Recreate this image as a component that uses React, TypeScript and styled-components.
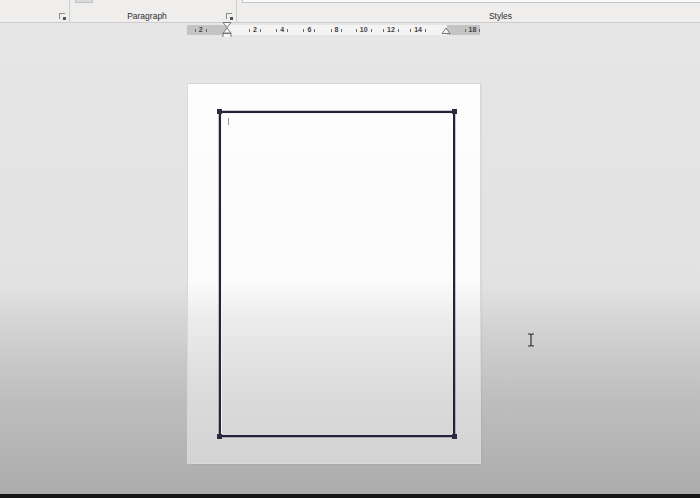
import React from "react";
import styled, { createGlobalStyle } from "styled-components";

const Global = createGlobalStyle`
  html, body { margin: 0; padding: 0; }
  body { width: 700px; height: 498px; overflow: hidden; font-family: "Liberation Sans", Arial, sans-serif; }
`;

const Screen = styled.div`
  width: 700px;
  height: 498px;
  display: flex;
  flex-direction: column;
  position: relative;
  overflow: hidden;
  background: #111;
`;

const Ribbon = styled.div`
  height: 22px;
  display: flex;
  background: #efeeed;
  border-bottom: 1px solid #cdcdcd;
`;

const Group = styled.div<{ $w?: number; $pl?: number; $pr?: number }>`
  position: relative;
  ${(p) => (p.$w ? `width: ${p.$w}px; flex: none;` : "flex: 1;")}
  border-right: 1px solid #cfcfcf;
  display: flex;
  align-items: flex-end;
  justify-content: center;
  padding-left: ${(p) => p.$pl ?? 0}px;
  padding-right: ${(p) => p.$pr ?? 0}px;
  padding-bottom: 1px;
  box-sizing: border-box;
  &:last-child { border-right: none; }
`;

const GroupLabel = styled.span`
  font-size: 8.5px;
  color: #2e2e2e;
  line-height: 10px;
`;

const Launcher = styled.span`
  position: absolute;
  right: 4px;
  bottom: 3px;
  width: 5px;
  height: 5px;
  border-left: 1px solid #8a8a8a;
  border-top: 1px solid #8a8a8a;
  &::after {
    content: "";
    position: absolute;
    right: -1px;
    bottom: -1px;
    width: 3px;
    height: 3px;
    background: #555;
  }
`;

const TopStub = styled.span<{ $l: number; $r?: number; $w?: number; $white?: boolean }>`
  position: absolute;
  top: 0;
  left: ${(p) => p.$l}px;
  ${(p) => (p.$w ? `width: ${p.$w}px;` : `right: ${p.$r ?? 0}px;`)}
  height: 2px;
  background: ${(p) => (p.$white ? "#fbfbfb" : "#d9d9d9")};
  border: 1px solid #c4c4c4;
  border-top: none;
  ${(p) => (p.$w ? "" : "border-right: none;")}
`;

const RulerBar = styled.div`
  height: 14px;
  background: #e6e6e6;
  display: flex;
  align-items: center;
  padding-left: 187px;
`;

const Ruler = styled.div`
  position: relative;
  width: 293px;
  height: 10px;
  display: flex;
  background: linear-gradient(
    to right,
    #c4c4c4 0,
    #c4c4c4 40px,
    #f3f3f3 40px,
    #f3f3f3 260px,
    #c4c4c4 260px,
    #c4c4c4 293px
  );
`;

const Cells = styled.div`
  display: flex;
  width: 293px;
  overflow: hidden;
`;

const Cell = styled.div`
  flex: none;
  width: 27.2px;
  display: flex;
  align-items: center;
  justify-content: center;
  gap: 3px;
  height: 10px;
`;

const Tick = styled.span`
  width: 1px;
  height: 3px;
  background: #6a6a6a;
`;

const Num = styled.span`
  font-size: 7px;
  font-weight: bold;
  color: #444;
  line-height: 8px;
`;

const Marker = styled.svg<{ $l: number }>`
  position: absolute;
  left: ${(p) => p.$l}px;
  top: -3px;
`;

const Workspace = styled.div`
  flex: 1;
  position: relative;
  background: linear-gradient(
    to bottom,
    #e6e6e6 0%,
    #e2e2e2 54%,
    #d2d2d2 64%,
    #bdbdbd 80%,
    #acacac 100%
  );
  padding-left: 188px;
  padding-top: 47px;
`;

const Page = styled.div`
  width: 292px;
  height: 379px;
  box-sizing: border-box;
  padding: 27px 0 0 31px;
  background: linear-gradient(
    to bottom,
    #fdfdfd 0%,
    #fbfbfb 52%,
    #ececec 62%,
    #dcdcdc 80%,
    #d3d3d3 100%
  );
  box-shadow: 0 0 0 1px #d8d8d8, 1px 1px 2px rgba(0, 0, 0, 0.12);
`;

const BorderBox = styled.div`
  position: relative;
  width: 236px;
  height: 326px;
  box-sizing: border-box;
  border: 2px solid #23233d;
  box-shadow: inset 1px 1px 0 #f4f4e8, 0 0 0 0.5px rgba(35, 35, 61, 0.5);
  padding: 5px 0 0 7px;
`;

const Corner = styled.span<{ $v: "top" | "bottom"; $h: "left" | "right" }>`
  position: absolute;
  ${(p) => p.$v}: -4px;
  ${(p) => p.$h}: -4px;
  width: 5px;
  height: 5px;
  background: #2b2b40;
`;

const Caret = styled.span`
  display: block;
  width: 1px;
  height: 7px;
  background: #9a9a9a;
`;

const IBeam = styled.svg`
  position: absolute;
  left: 527px;
  top: 296px;
`;

const BottomEdge = styled.div`
  height: 4px;
  background: #141414;
`;

const rulerNums = ["2", "", "2", "4", "6", "8", "10", "12", "14", "", "18"];

export default function App() {
  return (
    <Screen>
      <Global />
      <Ribbon>
        <Group $w={70}>
          <Launcher />
        </Group>
        <Group $w={167} $pr={12}>
          <TopStub $l={5} $w={16} />
          <GroupLabel>Paragraph</GroupLabel>
          <Launcher />
        </Group>
        <Group $pl={64}>
          <TopStub $l={5} $r={0} $white />
          <GroupLabel>Styles</GroupLabel>
        </Group>
      </Ribbon>
      <RulerBar>
        <Ruler>
          <Cells>
            {rulerNums.map((n, i) => (
              <Cell key={i}>
                {n ? (
                  <>
                    <Tick />
                    <Num>{n}</Num>
                    <Tick />
                  </>
                ) : (
                  <Tick />
                )}
              </Cell>
            ))}
          </Cells>
          <Marker $l={35} width="10" height="18" viewBox="0 0 10 18">
            <path d="M1 0.5 H9 L5 5.5 Z" fill="#f4f4f4" stroke="#6d6d6d" strokeWidth="0.9" />
            <path d="M5 6 L9 11 H1 Z" fill="#f4f4f4" stroke="#6d6d6d" strokeWidth="0.9" />
            <rect x="1" y="11.5" width="8" height="5" fill="#f4f4f4" stroke="#6d6d6d" strokeWidth="0.9" />
          </Marker>
          <Marker $l={254} width="10" height="14" viewBox="0 0 10 14">
            <path d="M5 6 L9 11.5 H1 Z" fill="#f4f4f4" stroke="#6d6d6d" strokeWidth="0.9" />
          </Marker>
        </Ruler>
      </RulerBar>
      <Workspace>
        <Page>
          <BorderBox>
            <Corner $v="top" $h="left" />
            <Corner $v="top" $h="right" />
            <Corner $v="bottom" $h="left" />
            <Corner $v="bottom" $h="right" />
            <Caret />
          </BorderBox>
        </Page>
        <IBeam width="8" height="14" viewBox="0 0 8 14">
          <path d="M1 1 H3 L4 2 L5 1 H7 M4 2 V12 M1 13 H3 L4 12 L5 13 H7" fill="none" stroke="#333" strokeWidth="1.2" />
        </IBeam>
      </Workspace>
      <BottomEdge />
    </Screen>
  );
}
